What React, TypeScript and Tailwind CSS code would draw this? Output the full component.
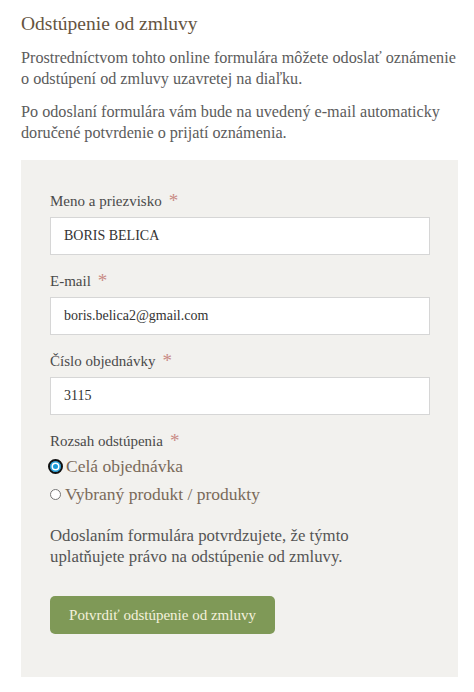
import { useState } from "react";

const fields = [
  { label: "Meno a priezvisko", value: "BORIS BELICA" },
  { label: "E-mail", value: "boris.belica2@gmail.com" },
  { label: "Číslo objednávky", value: "3115" },
];

const radioOn =
  "m-0 ml-[-2px] h-[15px] w-[15px] shrink-0 appearance-none rounded-full border-2 border-[#111] bg-[#1a9bd7] shadow-[inset_0_0_0_1.5px_#1a9bd7,inset_0_0_0_3px_#ffffff]";
const radioOff = "m-0 h-[11px] w-[11px] shrink-0 appearance-none rounded-full border border-[#767676] bg-white";

function Label({ text, className = "" }: { text: string; className?: string }) {
  return (
    <label className={`flex items-center text-[15px] leading-[20px] text-[#4a4a4a] ${className}`}>
      {text}
      <span className="ml-[7px] text-[19px] leading-[20px] text-[#c98b85]">*</span>
    </label>
  );
}

export default function App() {
  const [scope, setScope] = useState("all");

  return (
    <div className="min-h-[692px] bg-white pl-[21px] pt-[10px] font-['Liberation_Serif',serif] text-[#5c5c5c]">
      <h1 className="text-[19.5px] leading-[28px] text-[#65543f]">Odstúpenie od zmluvy</h1>

      <div className="w-[437px] text-[16.2px] leading-[21px]">
        <p className="mt-[10px]">
          Prostredníctvom tohto online formulára môžete odoslať oznámenie o odstúpení od zmluvy uzavretej na diaľku.
        </p>
        <p className="mt-[12px]">
          Po odoslaní formulára vám bude na uvedený e-mail automaticky doručené potvrdenie o prijatí oznámenia.
        </p>
      </div>

      <form className="mt-[16px] w-[437px] bg-[#f2f1ee] px-[29px] pb-[43px] pt-[31px]">
        {fields.map((field) => (
          <div key={field.label} className="mb-[16px]">
            <Label text={field.label} />
            <input
              defaultValue={field.value}
              className="mt-[6px] h-[38px] w-[380px] border border-[#d6d6d6] bg-white px-[13px] text-[14px] text-[#333] outline-none"
            />
          </div>
        ))}

        <Label text="Rozsah odstúpenia" className="mt-[14px]" />
        <div className="mt-[4px] flex flex-col gap-[6px] text-[17.5px] leading-[22px] text-[#7a6a5a]">
          <label className="flex items-center">
            <input
              type="radio"
              checked={scope === "all"}
              onChange={() => setScope("all")}
              className={scope === "all" ? radioOn : radioOff}
            />
            <span className="ml-[3px]">Celá objednávka</span>
          </label>
          <label className="flex items-center">
            <input
              type="radio"
              checked={scope === "part"}
              onChange={() => setScope("part")}
              className={scope === "part" ? radioOn : radioOff}
            />
            <span className="ml-[4px]">Vybraný produkt / produkty</span>
          </label>
        </div>

        <p className="mt-[20px] w-[340px] text-[16.8px] leading-[21px] text-[#555]">
          Odoslaním formulára potvrdzujete, že týmto uplatňujete právo na odstúpenie od zmluvy.
        </p>

        <button
          type="button"
          className="mt-[29px] h-[38px] w-[225px] rounded-[5px] bg-[#7f9957] text-[15px] text-[#f4f1dc]"
        >
          Potvrdiť odstúpenie od zmluvy
        </button>
      </form>
    </div>
  );
}
